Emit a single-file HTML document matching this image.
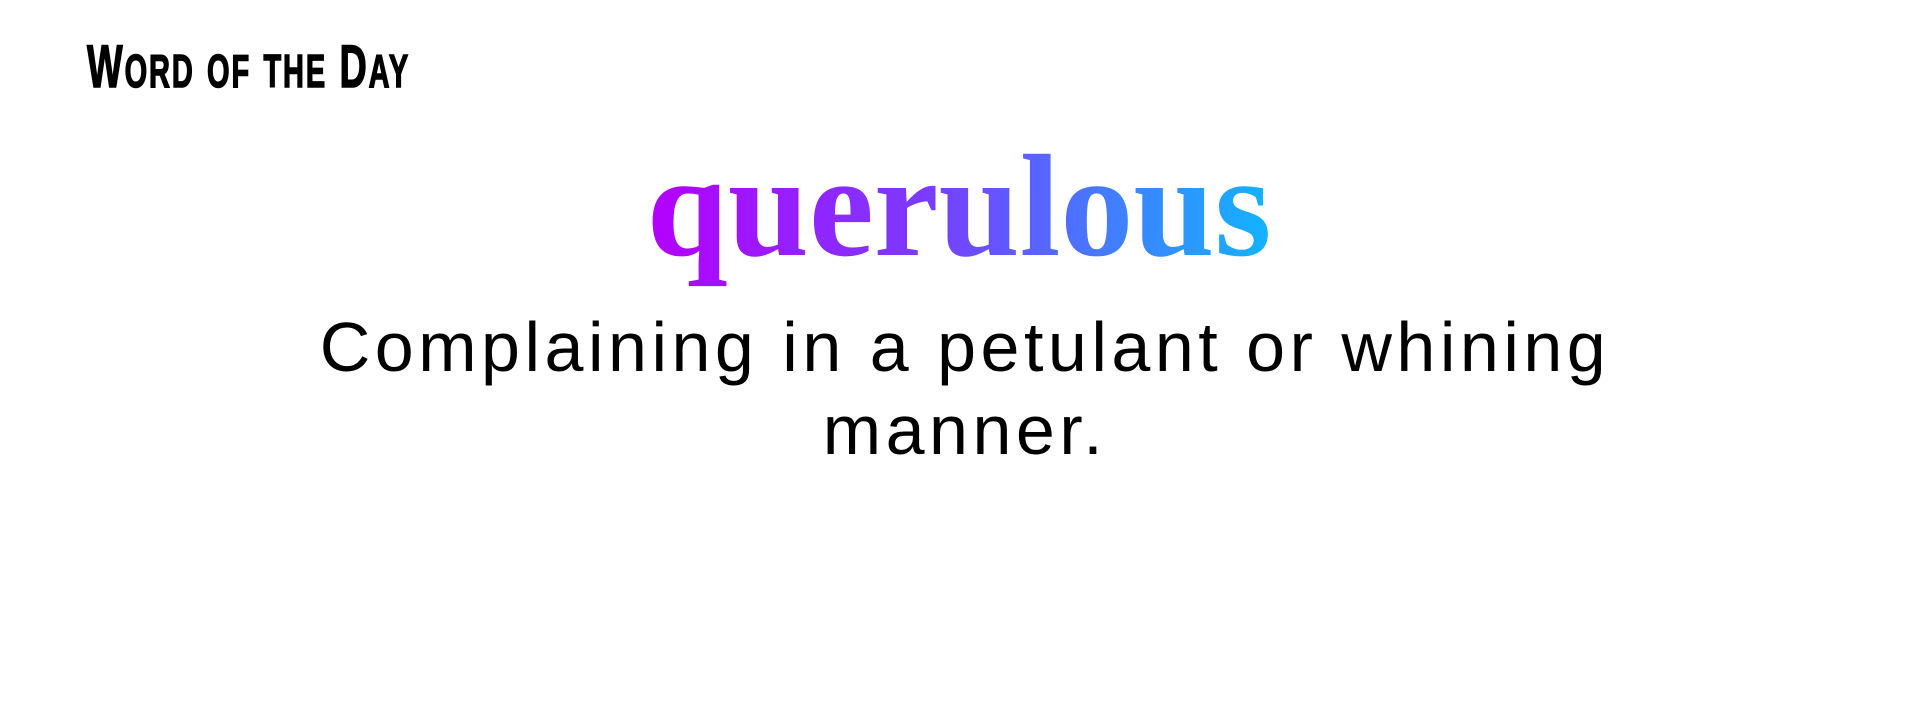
<!DOCTYPE html>
<html><head><meta charset="utf-8"><style>
html,body{margin:0;padding:0;background:#fff;width:1920px;height:720px;overflow:hidden}
.wotd{position:absolute;left:87px;top:32px;font-family:"Liberation Sans",sans-serif;font-weight:bold;font-size:60px;line-height:70px;white-space:nowrap;transform-origin:0 0;transform:scaleX(0.63);letter-spacing:3px;-webkit-text-stroke:1.5px #000}
.wotd .s{font-size:46px}
.word{position:absolute;left:-6px;width:1930px;top:116px;text-align:center;font-family:"Liberation Serif",serif;font-weight:bold;font-size:146px;line-height:180px;letter-spacing:0px}
.word span{background:linear-gradient(90deg,#b400ff 0%,#7a3cff 45%,#4a74ff 70%,#12b4ff 100%);-webkit-background-clip:text;background-clip:text;color:transparent}
.def{position:absolute;left:0;width:1930px;top:306px;text-align:center;font-family:"Liberation Sans",sans-serif;font-size:70px;line-height:83px;color:#000;letter-spacing:4.5px}
</style></head><body>
<div class="wotd">W<span class="s">ORD</span> <span class="s">OF</span> <span class="s">THE</span> D<span class="s">AY</span></div>
<div class="word"><span>querulous</span></div>
<div class="def">Complaining in a petulant or whining<br>manner.</div>
</body></html>
